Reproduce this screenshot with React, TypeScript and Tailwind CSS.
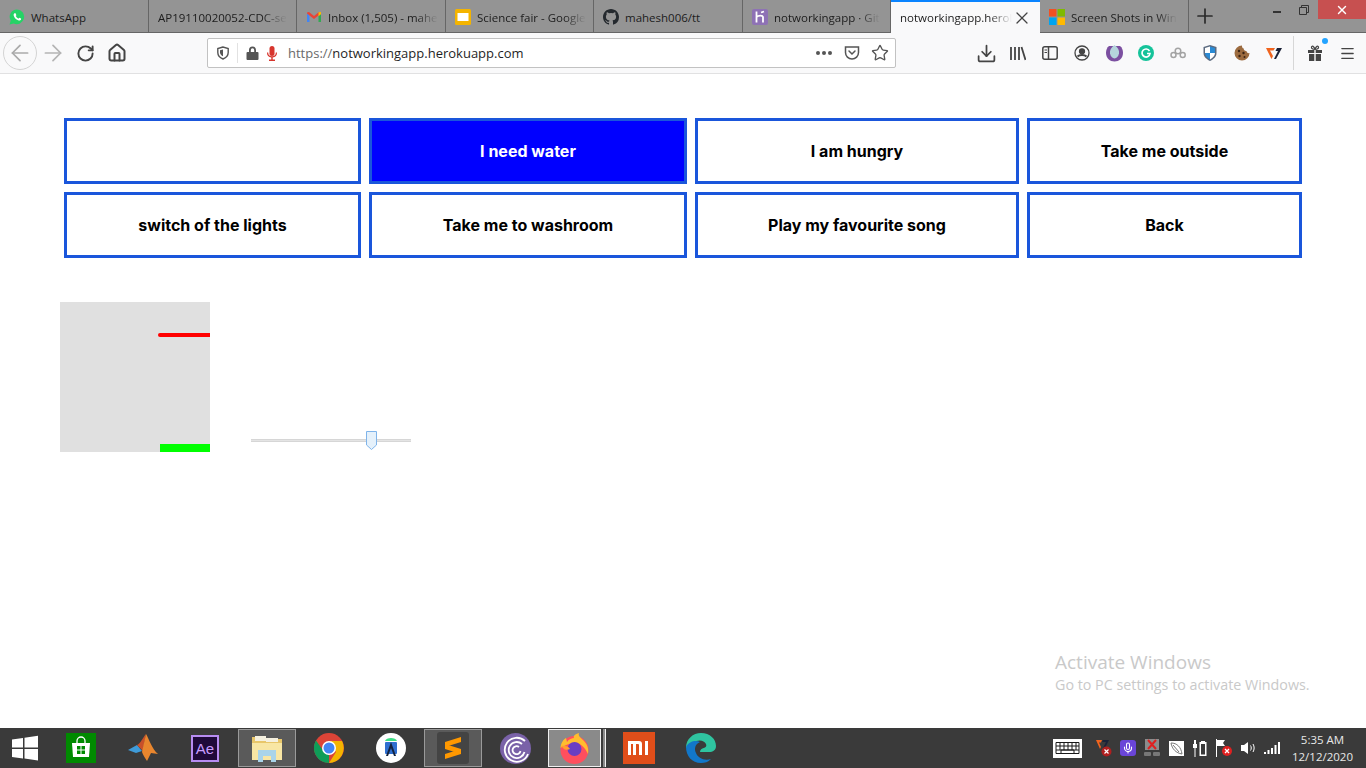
// App.tsx
// ブラウザのウィンドウごと再現したスクリーンショット。タブ、ツールバー、ページ本体、タスクバーの順に組む。

import type { ReactNode } from 'react';
import { ArrowLeft, ArrowRight, Download, House, Menu, Mic, Plus, RotateCw, Star, X } from 'lucide-react';

const UI_FONT = "font-['Open_Sans','Noto_Sans',sans-serif]";

const WhatsAppIcon = () => (
  <svg width="16" height="16" viewBox="0 0 16 16">
    <path d="M8 .5a7.300 7.300 0 0 0-6.300 11L.6 15.500l4.100-1.100A7.300 7.300 0 1 0 8 .5z" fill="#25d366" />
    <path
      d="M5.600 4.200c-.7.400-1.200 1.200-.9 2.300.6 2.300 2.700 4.500 5 5 1.100.2 2-.3 2.300-1.100l.1-.8-1.900-.9-.8 1c-1.200-.5-2.100-1.400-2.700-2.600l.7-.8-.8-2z"
      fill="#fff"
    />
  </svg>
);

const GmailIcon = () => (
  <svg width="16" height="16" viewBox="0 0 16 16">
    <path d="M1 4.500V13h2.500V6.500z" fill="#4285f4" />
    <path d="M15 4.500V13h-2.500V6.500z" fill="#34a853" />
    <path d="M1 3.500 3 3l5 4 5-4 2 .5v1L8 10 1 4.500z" fill="#ea4335" />
    <path d="M12.500 3.300 15 3v2.200l-2.500 2z" fill="#fbbc04" />
  </svg>
);

const SlidesIcon = () => (
  <svg width="16" height="16" viewBox="0 0 16 16">
    <rect width="16" height="16" rx="1.500" fill="#f4b400" />
    <rect x="2.500" y="4" width="11" height="8" fill="#fff" />
  </svg>
);

const GithubIcon = () => (
  <svg width="16" height="16" viewBox="0 0 16 16" fill="#24292e">
    <path d="M8 0C3.580 0 0 3.580 0 8c0 3.540 2.290 6.530 5.470 7.590.4.070.55-.17.55-.38v-1.340c-2.230.48-2.700-1.070-2.700-1.070-.36-.92-.89-1.170-.89-1.170-.73-.5.050-.49.050-.49.8.060 1.230.83 1.230.83.710 1.220 1.870.87 2.330.66.070-.52.280-.87.510-1.070-1.780-.2-3.640-.89-3.640-3.950 0-.87.310-1.590.82-2.150-.08-.2-.36-1.020.08-2.120 0 0 .67-.21 2.200.82a7.600 7.600 0 0 1 4 0c1.530-1.040 2.200-.82 2.200-.82.440 1.100.160 1.920.08 2.120.51.560.82 1.270.82 2.150 0 3.070-1.870 3.750-3.650 3.950.29.250.54.730.54 1.480v2.190c0 .21.150.46.550.38A8 8 0 0 0 16 8c0-4.420-3.580-8-8-8z" />
  </svg>
);

const HerokuIcon = () => (
  <svg width="16" height="16" viewBox="0 0 16 16">
    <rect width="16" height="16" rx="2" fill="#8e72b5" />
    <path d="M4.500 2.500v11M4.500 8c2-1.500 6-2 6.500 0v5.500M9 3.500l3-1" stroke="#fff" strokeWidth="1.800" fill="none" />
  </svg>
);

const MicrosoftIcon = () => (
  <svg width="16" height="16" viewBox="0 0 16 16" className="shrink-0">
    <rect width="7.500" height="7.500" fill="#f25022" />
    <rect x="8.500" width="7.500" height="7.500" fill="#7fba00" />
    <rect y="8.500" width="7.500" height="7.500" fill="#00a4ef" />
    <rect x="8.500" y="8.500" width="7.500" height="7.500" fill="#ffb900" />
  </svg>
);

const FADE = '[mask-image:linear-gradient(to_right,#000_80%,transparent)]';

const TABS: { title: string; icon?: ReactNode; fade?: boolean; width: string }[] = [
  { title: 'WhatsApp', icon: <WhatsAppIcon />, width: 'w-[149px]' },
  { title: 'AP19110020052-CDC-se', fade: true, width: 'w-[148px]' },
  { title: 'Inbox (1,505) - mahe', icon: <GmailIcon />, fade: true, width: 'w-[149px]' },
  { title: 'Science fair - Google', icon: <SlidesIcon />, fade: true, width: 'w-[148px]' },
  { title: 'mahesh006/tt', icon: <GithubIcon />, width: 'w-[149px]' },
  { title: 'notworkingapp · Git', icon: <HerokuIcon />, fade: true, width: 'w-[148px]' },
];

const Tab = ({ title, icon, fade, width }: (typeof TABS)[number]) => (
  <div className={`${width} h-[32px] shrink-0 flex items-center gap-[6px] pt-[2px] pl-[9px] border-r border-[#666] text-[11.5px] text-[#1c1c1c]`}>
    {icon && <span className="shrink-0">{icon}</span>}
    <span className={`pt-[1px] whitespace-nowrap ${fade ? FADE : ''}`}>{title}</span>
  </div>
);

const TabBar = () => (
  <div className="h-[33px] shrink-0 bg-[#949494] border-b border-[#666] flex">
    {TABS.map((tab) => (
      <Tab key={tab.title} {...tab} />
    ))}
    <div className="w-[149px] h-[33px] shrink-0 bg-[#f9f9fa] border-t-2 border-[#0a84ff] flex items-center pl-[9px] pr-[8px] text-[11.5px] text-[#1c1c1c]">
      <span className={`flex-1 whitespace-nowrap ${FADE}`}>notworkingapp.herol</span>
      <X size={20} strokeWidth={1.500} className="shrink-0 text-[#444]" />
    </div>
    <div className="w-[149px] h-[32px] shrink-0 flex items-center gap-[6px] pt-[2px] pl-[9px] border-r border-[#666] text-[11.5px] text-[#1c1c1c]">
      <MicrosoftIcon />
      <span className={`pt-[1px] whitespace-nowrap ${FADE}`}>Screen Shots in Win</span>
    </div>
    <div className="w-[32px] h-[32px] flex items-center justify-center">
      <Plus size={24} strokeWidth={1.700} className="text-[#2b2b2b]" />
    </div>
    <div className="flex-1" />
    <div className="flex h-[19px] items-center">
      <div className="w-[27px] flex justify-center">
        <span className="w-[8px] h-[2px] mt-[5px] bg-[#333]" />
      </div>
      <div className="w-[28px] flex justify-center">
        <svg width="10" height="10" viewBox="0 0 10 10" fill="none" stroke="#333">
          <path d="M.5 2.500h7v7h-7zM2.500 2.500V.5h7v7h-2" />
        </svg>
      </div>
      <div className="w-[48px] h-[19px] bg-[#c75050] flex items-center justify-center text-white">
        <X size={14} strokeWidth={2.500} />
      </div>
    </div>
  </div>
);

const ToolSlot = ({ children }: { children: ReactNode }) => (
  <div className="w-[32px] h-[32px] shrink-0 flex items-center justify-center text-[#444]">{children}</div>
);

const ToolBar = () => (
  <div className="h-[41px] shrink-0 bg-[#f9f9fa] border-b border-[#e1e1e2] flex items-center pl-[3px]">
    <div className="w-[34px] h-[34px] shrink-0 rounded-full border border-[#d4d4d4] flex items-center justify-center text-[#aaa]">
      <ArrowLeft size={26} strokeWidth={1.600} />
    </div>
    <div className="w-[32px] shrink-0 flex justify-center text-[#b4b4b4]">
      <ArrowRight size={26} strokeWidth={1.600} />
    </div>
    <ToolSlot>
      <RotateCw size={19} strokeWidth={2.400} />
    </ToolSlot>
    <ToolSlot>
      <House size={20} strokeWidth={2.400} />
    </ToolSlot>
    <div className="w-[689px] h-[30px] ml-[74px] bg-white border border-[#c2c2c2] rounded-[2px] flex items-center pl-[8px] pr-[6px] text-[13px] text-[#1f1f1f]">
      <svg width="14" height="14" viewBox="0 0 14 14" fill="none" stroke="#555" strokeWidth="1.400">
        <path d="M7 1 1.800 2.500v4C1.800 10 4.500 12 7 13c2.500-1 5.200-3 5.200-6.500v-4z" />
        <path d="M7 3.500 4 4.300v2.200c0 2 1.500 3 3 3.800z" fill="#555" stroke="none" />
      </svg>
      <span className="w-px h-[20px] bg-[#e2e2e2] ml-[7px] mr-[8px]" />
      <svg width="13" height="14" viewBox="0 0 13 14" fill="#555">
        <path d="M3 6V4a3.500 3.500 0 0 1 7 0v2h1.500a1 1 0 0 1 1 1v6a1 1 0 0 1-1 1h-10a1 1 0 0 1-1-1V7a1 1 0 0 1 1-1zm1.800 0h3.400V4a1.700 1.700 0 0 0-3.400 0z" />
      </svg>
      <svg width="10" height="15" viewBox="0 0 10 15" fill="#d7352d" className="ml-[8px]">
        <rect x="2.500" width="5" height="10" rx="2.500" />
        <path d="M0 6.500h1.200a3.800 3.800 0 0 0 7.600 0H10a5 5 0 0 1-4.300 5V13.500H8V15H2v-1.500h2.300v-2A5 5 0 0 1 0 6.500z" />
      </svg>
      <span className="ml-[11px] pt-[2px]">
        <span className="text-[#6a6a6a]">https://</span>notworkingapp.herokuapp.com
      </span>
      <span className="flex-1" />
      <span className="flex gap-[2px] mr-[12px]">
        <span className="w-[4px] h-[4px] rounded-full bg-[#555]" />
        <span className="w-[4px] h-[4px] rounded-full bg-[#555]" />
        <span className="w-[4px] h-[4px] rounded-full bg-[#555]" />
      </span>
      <svg width="16" height="16" viewBox="0 0 16 16" fill="none" stroke="#555" strokeWidth="1.500">
        <path d="M1.500 2h13v5.500a6.500 6.500 0 0 1-13 0z" />
        <path d="m5 6 3 3 3-3" strokeLinecap="round" />
      </svg>
      <Star size={18} strokeWidth={1.800} className="ml-[11px] text-[#555]" />
    </div>
    <div className="w-[74px] shrink-0" />
    <ToolSlot>
      <Download size={21} strokeWidth={2} />
    </ToolSlot>
    <ToolSlot>
      <svg width="16" height="15" viewBox="0 0 16 15" fill="none" stroke="#444" strokeWidth="1.800">
        <path d="M1 1v13M5 1v13M9 1v13M11.500 1l4 13" />
      </svg>
    </ToolSlot>
    <ToolSlot>
      <svg width="16" height="14" viewBox="0 0 16 14" fill="none" stroke="#444" strokeWidth="1.500">
        <rect x=".8" y=".8" width="14.400" height="12.400" rx="2" />
        <path d="M6.500 1v12" />
        <path d="M2.500 4h2.500M2.500 6.500h2.500" strokeWidth="1" />
      </svg>
    </ToolSlot>
    <ToolSlot>
      <svg width="16" height="16" viewBox="0 0 16 16" fill="none" stroke="#444" strokeWidth="1.300">
        <circle cx="8" cy="8" r="7" />
        <circle cx="8" cy="6.300" r="2.500" fill="#444" />
        <path d="M3.500 11.500c2-2 7-2 9 0" strokeWidth="2" />
      </svg>
    </ToolSlot>
    <ToolSlot>
      <svg width="17" height="17" viewBox="0 0 17 17">
        <path d="M3 1c-2 1.500-3 4-3 7 0 5 4 8.500 8.500 8.500S17 13 17 8c0-3-1-5.500-3-7z" fill="#7b4fa0" />
        <path d="M8.500 0c3.500 2.500 5 5.500 4.500 8.500s-2.500 4.500-4.500 5c-2-.5-4-2-4.500-5S5 2.500 8.500 0z" fill="#b5d5dc" />
      </svg>
    </ToolSlot>
    <ToolSlot>
      <svg width="16" height="16" viewBox="0 0 16 16" fill="none">
        <circle cx="8" cy="8" r="8" fill="#15c39a" />
        <path d="M11.500 6A4 4 0 1 0 12 8.500H9" stroke="#fff" strokeWidth="1.700" />
      </svg>
    </ToolSlot>
    <ToolSlot>
      <svg width="16" height="12" viewBox="0 0 16 12" fill="none" stroke="#a3a3a3" strokeWidth="1.500">
        <circle cx="3.500" cy="8" r="2.500" />
        <circle cx="8" cy="4" r="2.800" />
        <circle cx="12.700" cy="8" r="2.500" />
      </svg>
    </ToolSlot>
    <ToolSlot>
      <svg width="14" height="16" viewBox="0 0 14 16">
        <path d="M7 0 .5 2v6c0 4 3.500 6.500 6.500 8 3-1.500 6.500-4 6.500-8V2z" fill="#5c6b80" />
        <path d="M7 1.500 2 3v5h5zM7 8v6.500C9.500 13 12 11 12 8z" fill="#fff" />
        <path d="M7 1.500 12 3v5H7zM2 8h5v6.500C4.500 13 2 11 2 8z" fill="#2a8ad4" />
      </svg>
    </ToolSlot>
    <ToolSlot>
      <svg width="16" height="16" viewBox="0 0 16 16">
        <path d="M8 .5a7.500 7.500 0 1 0 7.500 7.500c-1.500.5-3-.5-3-2-1.500.2-3-1-2.700-2.500C8.500 3.500 7.800 2 8 .5z" fill="#9c6b3f" />
        <circle cx="5" cy="6" r="1.200" fill="#3b2313" />
        <circle cx="9.500" cy="8" r="1.200" fill="#3b2313" />
        <circle cx="5.500" cy="11" r="1.200" fill="#3b2313" />
        <circle cx="10.500" cy="12" r="1" fill="#3b2313" />
      </svg>
    </ToolSlot>
    <ToolSlot>
      <svg width="16" height="13" viewBox="0 0 16 13">
        <path d="M0 1h9L7.500 3.500H4L7 9l-1.500 3z" fill="#f0641e" />
        <path d="M11 1h5l-6 11H8l4-8H9.500z" fill="#1b2238" />
      </svg>
    </ToolSlot>
    <div className="w-px h-[34px] bg-[#d7d7d7] ml-[3px] mr-[5px]" />
    <div className="relative">
      <ToolSlot>
        <svg width="14" height="16" viewBox="0 0 14 16" fill="#444">
          <path d="M0 5h6.300v3H0zM7.700 5H14v3H7.700zM1 9h5.300v7H1zM7.700 9H13v7H7.700z" />
          <path d="M7 4.500C5 4.500 3 3.500 3.500 2S6 1 7 4.500zm0 0C9 4.500 11 3.500 10.500 2S8 1 7 4.500z" fill="none" stroke="#444" strokeWidth="1.200" />
        </svg>
      </ToolSlot>
      <span className="absolute top-[1px] right-[3px] w-[6px] h-[6px] rounded-full bg-[#23a3ff]" />
    </div>
    <ToolSlot>
      <Menu size={17} strokeWidth={1.800} />
    </ToolSlot>
  </div>
);

const BUTTONS = [
  '',
  'I need water',
  'I am hungry',
  'Take me outside',
  'switch of the lights',
  'Take me to washroom',
  'Play my favourite song',
  'Back',
];

const ButtonGrid = () => (
  <div className="grid grid-cols-[297px_318px_324px_275px] auto-rows-[66px] gap-2 ml-[64px]">
    {BUTTONS.map((label, i) => (
      <button
        key={label || i}
        className={`border-[3px] border-[#1a56db] font-['Inter',sans-serif] font-bold text-[16px] ${
          label === 'I need water' ? 'bg-[#0000ff] text-white' : 'bg-white text-black'
        }`}
      >
        {label}
      </button>
    ))}
  </div>
);

const GameCanvas = () => (
  <div className="relative w-[150px] h-[150px] bg-[#e0e0e0] overflow-hidden">
    <div className="absolute right-0 top-[31px] w-[52px] h-[4px] bg-[#ff0000] rounded-l-full" />
    <div className="absolute right-0 bottom-0 w-[50px] h-[8px] bg-[#00ff00]" />
  </div>
);

const Slider = () => (
  <div className="relative w-[160px] h-[3px] bg-[#e4e4e4] border-y border-[#d6d6d6] ml-[41px] mb-[10px]">
    <svg className="absolute left-[115px] top-[-9px]" width="11" height="19" viewBox="0 0 11 19">
      <path d="M.5.5h10v13.500l-5 4.500-5-4.500z" fill="#e5f1fb" stroke="#7fb4ea" />
    </svg>
  </div>
);

const Page = () => (
  <main className="relative flex-1 bg-white pt-[44px]">
    <ButtonGrid />
    <div className="flex items-end mt-[44px] ml-[60px]">
      <GameCanvas />
      <Slider />
    </div>
    <div className={`absolute left-[1055px] top-[575px] ${UI_FONT} text-[#c9c9c9]`}>
      <div className="text-[19px] leading-[26px]">Activate Windows</div>
      <div className="text-[14.300px] leading-[20px]">Go to PC settings to activate Windows.</div>
    </div>
  </main>
);

const TaskSlot = ({ children, open }: { children: ReactNode; open?: boolean }) => (
  <div className="w-[62px] h-[40px] shrink-0 flex items-center justify-center">
    <div className={`w-[58px] h-[38px] flex items-center justify-center ${open ? 'bg-[#5a5a5a] border border-[#9a9a9a]' : ''}`}>
      {children}
    </div>
  </div>
);

const TrayItem = ({ children }: { children: ReactNode }) => (
  <div className="w-[24px] shrink-0 flex justify-center">{children}</div>
);

const Taskbar = () => (
  <footer className="h-[40px] shrink-0 bg-[#3a3a3a] flex items-center">
    <div className="w-[50px] shrink-0 flex justify-center">
      <svg width="26" height="26" viewBox="0 0 26 26" fill="#fff">
        <path d="M0 4.500 11 3v9.500H0zM12.500 2.800 26 .8v11.700H12.500zM0 14h11v9.500L0 22zM12.500 14H26v11.500l-13.500-2z" />
      </svg>
    </div>
    <TaskSlot>
      <svg width="30" height="30" viewBox="0 0 30 30">
        <rect width="30" height="30" fill="#008a00" />
        <path d="M11 10V8a4 4 0 0 1 8 0v2" fill="none" stroke="#fff" strokeWidth="1.300" />
        <path d="M6 10h18l-1 14H7z" fill="#fff" />
        <path d="M11 13h3.500v3.500H11zM15.500 13H19v3.500h-3.500zM11 17.500h3.500V21H11zM15.500 17.500H19V21h-3.500z" fill="#008a00" />
      </svg>
    </TaskSlot>
    <TaskSlot>
      <svg width="32" height="30" viewBox="0 0 32 30">
        <path d="M1 17 10 12l5 6-6 2z" fill="#3f9bd8" />
        <path d="M10 12c3-1 5-6 9-11l-3 17z" fill="#c8502a" />
        <path d="M19 1c3 5 6 15 12 20l-7-1-4 8c-2-3-4-6-5-9z" fill="#e8862e" />
      </svg>
    </TaskSlot>
    <TaskSlot>
      <div className="w-[28px] h-[27px] bg-[#1f0a3a] border-2 border-[#b78cf2] flex items-center justify-center text-[15px] leading-none text-[#c79cff] font-['Liberation_Sans',sans-serif]">
        Ae
      </div>
    </TaskSlot>
    <TaskSlot open>
      <svg width="32" height="30" viewBox="0 0 32 30">
        <path d="M1 4h11l2 2h17v20H1z" fill="#e8c66a" />
        <rect x="4" y="3" width="11" height="5" fill="#f5f0df" />
        <rect x="15" y="5" width="12" height="4" fill="#f5f0df" />
        <path d="M1 10h30v17H1z" fill="#f8e6a4" />
        <path d="M7 17h18v12h-5v-6h-8v6H7z" fill="#a9d4ea" />
      </svg>
    </TaskSlot>
    <TaskSlot>
      <svg width="30" height="30" viewBox="0 0 30 30">
        <circle cx="15" cy="15" r="15" fill="#db4437" />
        <path d="M15 30a15 15 0 0 1-13-22.500L9.500 18l5.500 4z" fill="#0f9d58" />
        <path d="M15 8h13a15 15 0 0 1-13 22l7-11z" fill="#f4b400" />
        <circle cx="15" cy="15" r="7" fill="#fff" />
        <circle cx="15" cy="15" r="5.500" fill="#4285f4" />
      </svg>
    </TaskSlot>
    <TaskSlot>
      <svg width="30" height="30" viewBox="0 0 30 30">
        <circle cx="15" cy="15" r="15" fill="#fff" />
        <path d="M9 8c1-4 11-4 12 0z" fill="#3ddc84" />
        <rect x="9" y="9" width="12" height="12" rx="1" fill="#2f6fd0" />
        <path d="M15 9l-5 14h2l3-8 3 8h2z" fill="#14233f" />
      </svg>
    </TaskSlot>
    <TaskSlot open>
      <div className="w-[32px] h-[32px] rounded-[3px] bg-[#444] flex items-center justify-center">
        <svg width="16" height="22" viewBox="0 0 16 22" fill="#ff9800">
          <path d="M16 0v5L0 10V5zM0 7l16 5v5L0 12zM16 12v5L0 22v-5z" />
        </svg>
      </div>
    </TaskSlot>
    <TaskSlot>
      <svg width="31" height="31" viewBox="0 0 31 31" fill="none">
        <circle cx="15.500" cy="15.500" r="15.500" fill="#7a62a8" />
        <path d="M25 8a12 12 0 1 0 3 13M22 11a8 8 0 1 0 2.500 8M19 14a4 4 0 1 0 1.500 4" stroke="#fff" strokeWidth="1.800" />
      </svg>
    </TaskSlot>
    <div className="w-[62px] h-[40px] shrink-0 flex items-center pl-[2px]">
      <div className="w-[53px] h-[38px] bg-[#8a8a8a] border border-[#f0f0f0] flex items-center justify-center">
        <svg width="31" height="31" viewBox="0 0 31 31">
          <circle cx="15.500" cy="17" r="14" fill="#ff4f5e" />
          <path d="M1.500 15C2 9 5 6 7 5l1 4c2-3 5-4 7-4-1-2 1-4 5-5-1 3 1 4 4 7 4 4 6 8 5 14-4-8-9-12-14-11-4 0-10 3-14 5z" fill="#ffbd2e" />
          <circle cx="15.500" cy="16" r="7" fill="#6a3ec2" />
          <path d="M2 13c3-1 8 0 9 3-2 1-5 1-6 0z" fill="#ff9d2e" />
        </svg>
      </div>
      <div className="w-[3px] h-[38px] ml-[2px] bg-[#8a8a8a] border-r border-[#f0f0f0]" />
    </div>
    <div className="w-[62px] shrink-0 flex justify-center">
      <div className="w-[32px] h-[32px] bg-[#e04e1a] flex items-center justify-center">
        <svg width="22" height="14" viewBox="0 0 22 14" fill="#fff">
          <path d="M0 0h11a3 3 0 0 1 3 3v11h-3V4a1 1 0 0 0-1-1H8v11H5V3H3v11H0zM17 0h3v14h-3z" />
        </svg>
      </div>
    </div>
    <div className="w-[62px] shrink-0 flex justify-center">
      <svg width="32" height="32" viewBox="0 0 32 32">
        <path d="M1 16C1 7 8 1 16 1c9 0 15 6 15 13 0 4-3 6-7 6h-9c0-5 8-3 6-8-2-4-8-5-13-1-4 3-6 5-7 5z" fill="#2fc4a0" />
        <path d="M1 15c3-6 10-7 14-5-5 2-6 7-4 11 2 5 8 8 15 6-3 3-6 4-10 4C7 31 1 24 1 15z" fill="#1277c9" />
      </svg>
    </div>
    <div className="flex-1" />
    <svg width="29" height="19" viewBox="0 0 29 19" fill="none" stroke="#1a1a1a" className="mr-[10px]">
      <rect x=".5" y=".5" width="28" height="18" fill="#fff" stroke="#fff" />
      <path d="M3 3.500h23v11H3zM3 7h23M3 11h23M7 3.500V11M11 3.500V11M15 3.500V11M19 3.500V11M23 3.500V11M8 14.500V11h13v3.500" />
    </svg>
    <TrayItem>
      <svg width="16" height="18" viewBox="0 0 16 18">
        <path d="M0 1h6L5 3.500H3L5 8 4 10z" fill="#f0641e" />
        <path d="M7 1h6l-4 8H7l3-6H6z" fill="#1b2238" />
        <circle cx="10.500" cy="12.500" r="5" fill="#b01f1f" />
        <path d="m8.500 10.500 4 4m0-4-4 4" stroke="#fff" strokeWidth="1.200" />
      </svg>
    </TrayItem>
    <TrayItem>
      <div className="w-[16px] h-[16px] rounded-[3px] bg-[#6a45d8] flex items-center justify-center">
        <Mic size={12} strokeWidth={2.200} className="text-white" />
      </div>
    </TrayItem>
    <TrayItem>
      <svg width="16" height="18" viewBox="0 0 16 18">
        <rect x="1" y="0" width="14" height="11" fill="#8c8c8c" />
        <path d="m4 1 8 9m0-9-8 9" stroke="#e02020" strokeWidth="2" />
        <rect x="0" y="13" width="7" height="4" rx="1" fill="#777" />
        <rect x="9" y="13" width="7" height="4" rx="1" fill="#777" />
      </svg>
    </TrayItem>
    <TrayItem>
      <div className="w-[15px] h-[15px] bg-white flex items-center justify-center">
        <svg width="13" height="13" viewBox="0 0 13 13" fill="none" stroke="#777">
          <path d="M1 1c6 0 10 4 11 11C6 11 2 7 1 1zM3 3l6 7" />
        </svg>
      </div>
    </TrayItem>
    <TrayItem>
      <svg width="15" height="17" viewBox="0 0 15 17" fill="#fff">
        <path d="M1 0v4H0v4h1.500v9h1V8H4V4H3V0zM7 2h1V1h4v1h1.500v14h-7V2zM8 4v10.500h4V4z" />
      </svg>
    </TrayItem>
    <TrayItem>
      <svg width="16" height="18" viewBox="0 0 16 18">
        <path d="M0 0h1v18H0zM1 1h8L7 4l2 3H1z" fill="#fff" />
        <circle cx="11" cy="12" r="5" fill="#e02020" />
        <path d="m9 10 4 4m0-4-4 4" stroke="#fff" strokeWidth="1.300" />
      </svg>
    </TrayItem>
    <TrayItem>
      <svg width="15" height="14" viewBox="0 0 15 14" fill="none" stroke="#fff">
        <path d="M0 4h3l4-3v12L3 10H0z" fill="#fff" stroke="none" />
        <path d="M9.500 4.500c1 1.500 1 3.500 0 5M12 3c1.500 2.500 1.500 5.500 0 8" />
      </svg>
    </TrayItem>
    <TrayItem>
      <svg width="16" height="12" viewBox="0 0 16 12" fill="#fff">
        <path d="M0 10h2v2H0zM3.500 8h2v4h-2zM7 6h2v6H7zM10.500 3h2v9h-2zM14 0h2v12h-2z" />
      </svg>
    </TrayItem>
    <div className="w-[77px] mr-[5px] flex flex-col items-center text-[11.500px] leading-[17px] text-[#e8e8e8]">
      <span>5:35 AM</span>
      <span>12/12/2020</span>
    </div>
  </footer>
);

export default function App() {
  return (
    <div className={`w-[1366px] h-[768px] overflow-hidden flex flex-col ${UI_FONT}`}>
      <TabBar />
      <ToolBar />
      <Page />
      <Taskbar />
    </div>
  );
}
